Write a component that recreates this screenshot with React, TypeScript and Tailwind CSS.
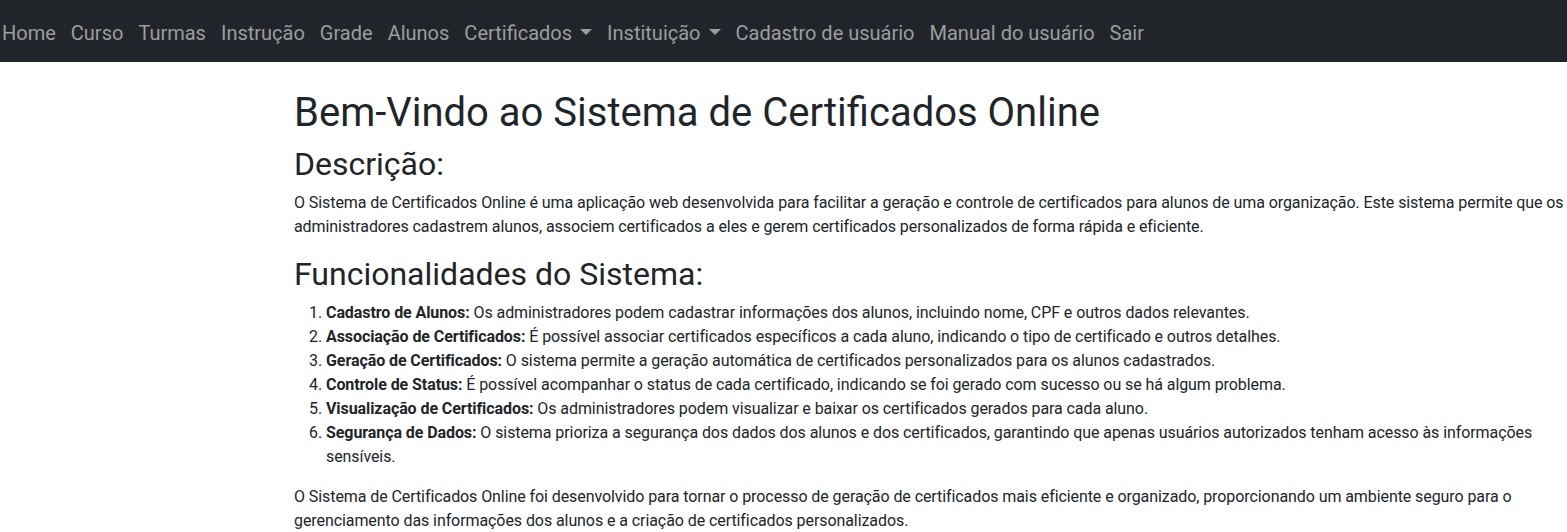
const links = [
  { label: "Home" },
  { label: "Curso" },
  { label: "Turmas" },
  { label: "Instrução" },
  { label: "Grade" },
  { label: "Alunos" },
  { label: "Certificados", dropdown: true },
  { label: "Instituição", dropdown: true },
  { label: "Cadastro de usuário" },
  { label: "Manual do usuário" },
  { label: "Sair" },
]

const features = [
  {
    title: "Cadastro de Alunos:",
    text: "Os administradores podem cadastrar informações dos alunos, incluindo nome, CPF e outros dados relevantes.",
  },
  {
    title: "Associação de Certificados:",
    text: "É possível associar certificados específicos a cada aluno, indicando o tipo de certificado e outros detalhes.",
  },
  {
    title: "Geração de Certificados:",
    text: "O sistema permite a geração automática de certificados personalizados para os alunos cadastrados.",
  },
  {
    title: "Controle de Status:",
    text: "É possível acompanhar o status de cada certificado, indicando se foi gerado com sucesso ou se há algum problema.",
  },
  {
    title: "Visualização de Certificados:",
    text: "Os administradores podem visualizar e baixar os certificados gerados para cada aluno.",
  },
  {
    title: "Segurança de Dados:",
    text: "O sistema prioriza a segurança dos dados dos alunos e dos certificados, garantindo que apenas usuários autorizados tenham acesso às informações sensíveis.",
  },
]

const Navbar = () => (
  <nav className="flex h-[62px] items-center bg-[#212529] pl-[2px] pt-1">
    <ul className="flex items-center gap-[15px]">
      {links.map((link) => (
        <li key={link.label}>
          <a
            href="#"
            className="flex items-center text-[20px] leading-[30px] text-[#9b9d9f]"
          >
            {link.label}
            {link.dropdown && (
              <span className="ml-[8px] mt-[-2px] h-0 w-0 border-x-[6px] border-t-[6px] border-x-transparent border-t-[#9b9d9f]" />
            )}
          </a>
        </li>
      ))}
    </ul>
  </nav>
)

export default function App() {
  return (
    <div className="min-h-screen overflow-hidden bg-white font-['Roboto',sans-serif] text-[#212529]">
      <Navbar />
      <main className="mt-[27px] w-[1290px] pl-[294px] box-content">
        <h1 className="mb-2 text-[40px] font-normal leading-[48px]">
          Bem-Vindo ao Sistema de Certificados Online
        </h1>
        <h2 className="mb-2 text-[32px] font-normal leading-[38px]">
          Descrição:
        </h2>
        <p className="mb-4 text-base leading-6 tracking-[-0.005em]">
          O Sistema de Certificados Online é uma aplicação web desenvolvida para
          facilitar a geração e controle de certificados para alunos de uma
          organização. Este sistema permite que os administradores cadastrem
          alunos, associem certificados a eles e gerem certificados
          personalizados de forma rápida e eficiente.
        </p>
        <h2 className="mb-2 text-[32px] font-normal leading-[38px]">
          Funcionalidades do Sistema:
        </h2>
        <ol className="mb-4 list-decimal pl-8 text-base leading-6 tracking-[-0.005em]">
          {features.map((f) => (
            <li key={f.title}>
              <strong className="font-bold">{f.title}</strong> {f.text}
            </li>
          ))}
        </ol>
        <p className="text-base leading-6 tracking-[-0.005em]">
          O Sistema de Certificados Online foi desenvolvido para tornar o
          processo de geração de certificados mais eficiente e organizado,
          proporcionando um ambiente seguro para o gerenciamento das
          informações dos alunos e a criação de certificados personalizados.
        </p>
      </main>
    </div>
  )
}
